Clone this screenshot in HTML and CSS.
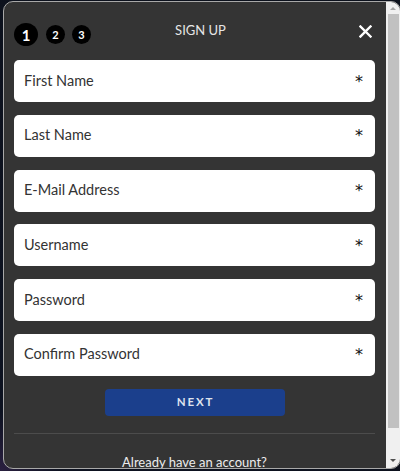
FILE: index.html
```html
<!DOCTYPE html>
<html>
<head>
<meta charset="utf-8">
<link rel="stylesheet" href="styles.css">
</head>
<body>
<div class="dialog">
  <div class="content">
    <div class="header">
      <div class="steps">
        <span class="step active">1</span>
        <span class="step">2</span>
        <span class="step">3</span>
      </div>
      <div class="title">SIGN UP</div>
      <div class="close">
        <svg width="13" height="13" viewBox="0 0 13 13"><path d="M1.5 1.5 L11.5 11.5 M11.5 1.5 L1.5 11.5" stroke="#fff" stroke-width="2.4" stroke-linecap="square"/></svg>
      </div>
    </div>
    <div class="field"><span>First Name</span><span class="req">*</span></div>
    <div class="field"><span>Last Name</span><span class="req">*</span></div>
    <div class="field"><span>E-Mail Address</span><span class="req">*</span></div>
    <div class="field"><span>Username</span><span class="req">*</span></div>
    <div class="field"><span>Password</span><span class="req">*</span></div>
    <div class="field"><span>Confirm Password</span><span class="req">*</span></div>
    <button class="next">NEXT</button>
    <div class="divider"></div>
    <div class="login">Already have an account?</div>
  </div>
  <div class="scrollbar">
    <div class="arrow up"></div>
    <div class="thumb"></div>
    <div class="arrow down"></div>
  </div>
</div>
</body>
</html>
```

FILE: styles.css
```css
html, body {
  margin: 0;
  padding: 0;
}
body {
  width: 400px;
  height: 471px;
  overflow: hidden;
  background: radial-gradient(circle at 0 100%, #2a2040 0, #0d1220 60px, #0c111c 100%);
  font-family: Lato, "Open Sans", sans-serif;
}
.dialog {
  box-sizing: border-box;
  margin: 1px 0 0 3px;
  width: 398px;
  height: 468px;
  border: 1px solid #a8a8a8;
  border-radius: 10px;
  background: #343434;
  overflow: hidden;
  display: flex;
}
.content {
  width: 382px;
  box-sizing: border-box;
  padding: 0 11px 0 10px;
  flex: none;
}
.header {
  height: 58px;
  display: grid;
  grid-template-columns: 1fr auto 1fr;
  align-items: start;
}
.steps {
  margin-top: 21px;
  display: flex;
  align-items: center;
  gap: 7px;
}
.step {
  width: 19px;
  height: 19px;
  border-radius: 50%;
  background: #000;
  color: #fff;
  font-weight: 700;
  font-size: 11px;
  display: flex;
  align-items: center;
  justify-content: center;
}
.step.active {
  width: 24px;
  height: 23px;
  font-size: 15px;
  margin-right: 1px;
}
.title {
  margin-top: 20px;
  padding-left: 12px;
  color: #e6e6e6;
  font-size: 13px;
  line-height: 16px;
}
.close {
  justify-self: end;
  margin-top: 23px;
  margin-right: 3px;
  height: 13px;
}
.close svg {
  display: block;
}
.field {
  height: 42px;
  margin-bottom: 12.8px;
  background: #fff;
  border-radius: 5px;
  display: flex;
  align-items: center;
  justify-content: space-between;
  padding: 0 12px 2px 10px;
  box-sizing: border-box;
  color: #333;
  font-size: 14.5px;
}
.req {
  font-family: "DejaVu Sans", sans-serif;
  font-size: 16px;
  color: #111;
  margin-top: 2px;
}
.next {
  display: block;
  margin: 0 auto;
  width: 180px;
  height: 27px;
  border: none;
  border-radius: 4px;
  background: #1b3f8c;
  color: #dfe3ee;
  font-family: Lato, sans-serif;
  font-size: 11.5px;
  font-weight: 700;
  letter-spacing: 1.8px;
  padding: 0 0 1px 2px;
}
.divider {
  margin-top: 17px;
  height: 1px;
  background: #4c4c4c;
}
.login {
  margin-top: 20px;
  text-align: center;
  color: #ececec;
  font-size: 13px;
  line-height: 16px;
}
.scrollbar {
  flex: none;
  width: 14px;
  background: #f0f0f0;
  display: flex;
  flex-direction: column;
  align-items: center;
  box-sizing: border-box;
  padding: 0 1px 0 1px;
}
.arrow {
  width: 0;
  height: 0;
  border-left: 3px solid transparent;
  border-right: 3px solid transparent;
}
.arrow.up {
  margin-top: 5px;
  border-bottom: 3px solid #a3a3a3;
}
.arrow.down {
  margin-top: 31px;
  border-top: 3px solid #505050;
}
.thumb {
  margin-top: 4px;
  width: 11px;
  height: 414px;
  background: #c1c1c1;
}
```
